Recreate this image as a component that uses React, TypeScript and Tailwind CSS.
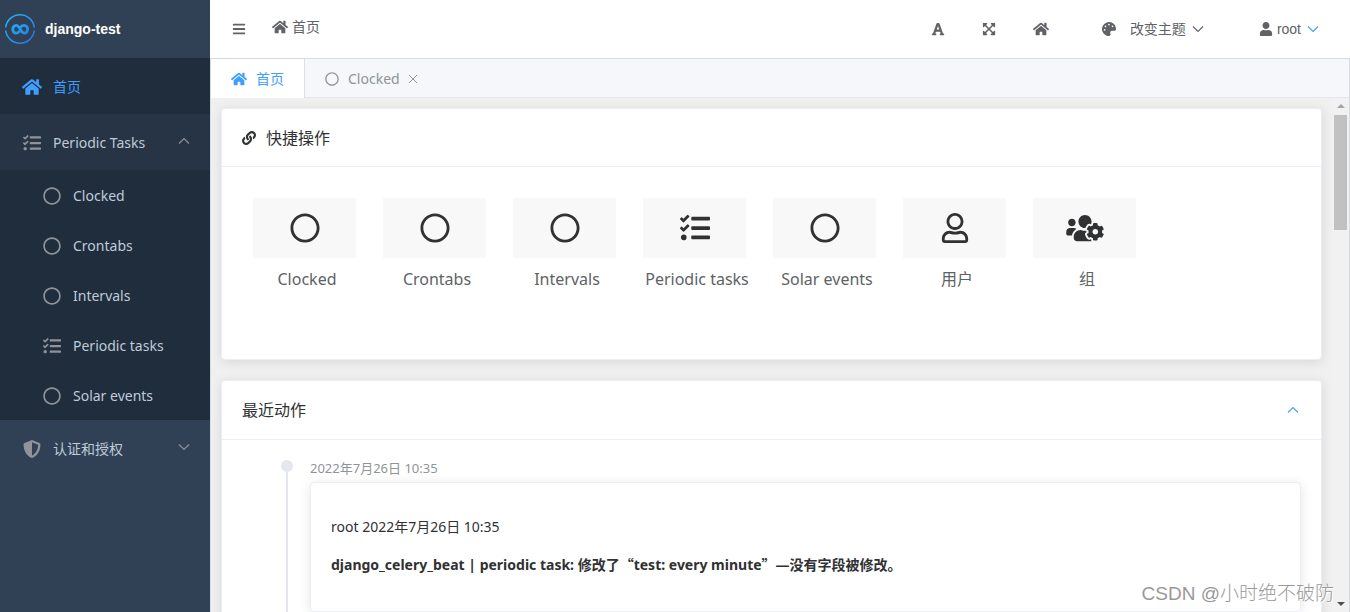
import type { ReactNode } from "react";
import type { IconType } from "react-icons";
import {
  FaBars,
  FaExpandArrowsAlt,
  FaFont,
  FaHome,
  FaLink,
  FaPalette,
  FaRegCircle,
  FaRegUser,
  FaShieldAlt,
  FaTasks,
  FaUser,
  FaUsersCog,
} from "react-icons/fa";

const subMenus: { name: string; icon: IconType }[] = [
  { name: "Clocked", icon: FaRegCircle },
  { name: "Crontabs", icon: FaRegCircle },
  { name: "Intervals", icon: FaRegCircle },
  { name: "Periodic tasks", icon: FaTasks },
  { name: "Solar events", icon: FaRegCircle },
];

const quickActions: { name: string; icon: IconType; iconClass: string }[] = [
  { name: "Clocked", icon: FaRegCircle, iconClass: "size-[30px]" },
  { name: "Crontabs", icon: FaRegCircle, iconClass: "size-[30px]" },
  { name: "Intervals", icon: FaRegCircle, iconClass: "size-[30px]" },
  { name: "Periodic tasks", icon: FaTasks, iconClass: "size-[30px]" },
  { name: "Solar events", icon: FaRegCircle, iconClass: "size-[30px]" },
  { name: "用户", icon: FaRegUser, iconClass: "size-[30px]" },
  { name: "组", icon: FaUsersCog, iconClass: "w-[38px] h-[30px]" },
];

export default function App() {
  return (
    <div className="relative flex h-screen overflow-hidden bg-white font-['Noto_Sans','Noto_Sans_CJK_SC',sans-serif] text-sm text-[#303133]">
      <Sidebar />
      <div className="flex min-w-0 flex-1 flex-col">
        <Header />
        <div className="flex min-h-0 flex-1 flex-col border border-b-0 border-[#d8dce5]">
          <Tabs />
          <div className="flex min-h-0 flex-1 bg-[#f0f0f0]">
            <main className="flex min-w-0 flex-1 flex-col gap-5 overflow-hidden p-2.5">
              <QuickActions />
              <RecentActions />
            </main>
            <ScrollBar />
          </div>
        </div>
      </div>
      <div className="pointer-events-none absolute right-4 bottom-1 font-['Liberation_Sans','Noto_Sans_CJK_SC',sans-serif] text-[19px] leading-7 font-light text-[#999] [text-shadow:1px_1px_0_#fff]">
        CSDN @小时绝不破防
      </div>
    </div>
  );
}

function Sidebar() {
  return (
    <aside className="flex w-[210px] shrink-0 flex-col bg-[#304156] text-[#bfcbd9]">
      <div className="flex h-[58px] items-center gap-[9px] pl-1">
        <Logo />
        <span className="font-['Liberation_Sans',sans-serif] font-bold text-white">
          django-test
        </span>
      </div>
      <nav>
        <a
          href="#home"
          className="flex h-14 items-center gap-[11px] bg-[#1f2d3d] pt-0.5 pl-[22px] text-[#409eff]"
        >
          <FaHome className="size-5" />
          首页
        </a>
        <button className="flex h-14 w-full items-center gap-3 bg-[#263445] pt-0.5 pr-5 pl-[23px]">
          <FaTasks className="size-[18px] text-[#909399]" />
          Periodic Tasks
          <Chevron up className="mb-1 ml-auto text-[#909399]" />
        </button>
        <ul className="bg-[#1f2d3d]">
          {subMenus.map(({ name, icon: Icon }) => (
            <li key={name}>
              <a
                href="#menu"
                className="flex h-[50px] items-center gap-3 pt-0.5 pl-[43px]"
              >
                <Icon className="size-[18px] text-[#909399]" />
                {name}
              </a>
            </li>
          ))}
        </ul>
        <button className="flex h-14 w-full items-center gap-3 pt-0.5 pr-5 pl-[23px]">
          <FaShieldAlt className="size-[18px] text-[#909399]" />
          认证和授权
          <Chevron className="mb-1 ml-auto text-[#909399]" />
        </button>
      </nav>
    </aside>
  );
}

function Header() {
  return (
    <header className="flex h-[58px] shrink-0 items-center pr-[31px] pl-[22px] text-[#606266]">
      <button aria-label="menu">
        <FaBars className="size-3.5" />
      </button>
      <a href="#home" className="mb-1 ml-[26px] flex items-center gap-1">
        <FaHome className="size-4" />
        首页
      </a>
      <div className="ml-auto flex items-center">
        <button aria-label="font size">
          <FaFont className="size-3.5" />
        </button>
        <button aria-label="fullscreen" className="ml-[37px]">
          <FaExpandArrowsAlt className="size-3.5" />
        </button>
        <a href="#home" aria-label="home" className="ml-[37px]">
          <FaHome className="size-4" />
        </a>
        <button className="ml-[53px] flex items-center">
          <FaPalette className="mr-3.5 size-3.5" />
          改变主题
          <Chevron className="ml-1.5" />
        </button>
        <button className="ml-[55px] flex items-center font-['Liberation_Sans',sans-serif]">
          <FaUser className="mr-1 size-3.5" />
          root
          <Chevron className="ml-1.5 text-[#409eff]" />
        </button>
      </div>
    </header>
  );
}

function Tabs() {
  return (
    <div className="flex h-[39px] shrink-0 bg-[#f5f7fa]">
      <a
        href="#home"
        className="flex w-[94px] items-center gap-[9px] border-r border-[#dcdfe6] bg-white pl-5 text-[#409eff]"
      >
        <FaHome className="size-4" />
        首页
      </a>
      <div className="flex flex-1 items-center border-b border-[#e4e7ed] pt-px pl-5 text-[#909399]">
        <a href="#clocked" className="flex items-center gap-[9px]">
          <FaRegCircle className="size-3.5" />
          Clocked
        </a>
        <button aria-label="close" className="ml-2">
          <svg
            viewBox="0 0 10 10"
            className="size-2.5"
            stroke="currentColor"
            fill="none"
          >
            <path d="M1 1L9 9M9 1L1 9" />
          </svg>
        </button>
      </div>
    </div>
  );
}

function Card({
  children,
  className = "",
}: {
  children: ReactNode;
  className?: string;
}) {
  return (
    <section
      className={`shrink-0 rounded border border-[#ebeef5] bg-white shadow-[0_2px_12px_0_rgba(0,0,0,0.1)] ${className}`}
    >
      {children}
    </section>
  );
}

function QuickActions() {
  return (
    <Card className="min-h-[252px]">
      <div className="flex h-[58px] items-center gap-2.5 border-b border-[#ebeef5] px-5 text-base">
        <FaLink className="size-3.5" />
        快捷操作
      </div>
      <div className="flex flex-wrap px-5 pt-[31px]">
        {quickActions.map(({ name, icon: Icon, iconClass }) => (
          <a
            key={name}
            href="#action"
            className="flex w-[130px] flex-col text-center text-base text-[#606266]"
          >
            <span className="mr-4 ml-[11px] flex h-[60px] items-center justify-center bg-[#f8f8f8] text-[#303133]">
              <Icon className={iconClass} />
            </span>
            <span className="mt-[9px] whitespace-nowrap">{name}</span>
          </a>
        ))}
      </div>
    </Card>
  );
}

function RecentActions() {
  return (
    <Card>
      <div className="flex h-[59px] items-center justify-between border-b border-[#ebeef5] px-5 text-base">
        最近动作
        <button aria-label="collapse" className="mr-0.5">
          <Chevron up className="text-[#409eff]" />
        </button>
      </div>
      <ol className="p-5 pl-[59px]">
        <li className="flex gap-[17px]">
          <div className="flex w-3 flex-col items-center">
            <span className="size-3 rounded-full bg-[#e4e7ed]" />
            <span className="w-0.5 flex-1 bg-[#e4e7ed]" />
          </div>
          <div className="min-w-0 flex-1 pb-5">
            <time className="block h-[22px] text-[13px] leading-4 text-[#909399]">
              2022年7月26日 10:35
            </time>
            <Card className="flex flex-col gap-[17px] px-5 pt-[34px] pb-9">
              <p>root 2022年7月26日 10:35</p>
              <p className="font-bold">
                django_celery_beat | periodic task: 修改了
                <Quote>“</Quote>test: every minute<Quote>”</Quote>
                —没有字段被修改。
              </p>
            </Card>
          </div>
        </li>
      </ol>
    </Card>
  );
}

// full-width quotation marks
function Quote({ children }: { children: ReactNode }) {
  return (
    <span className="font-['Noto_Sans_CJK_SC',sans-serif]">{children}</span>
  );
}

function ScrollBar() {
  return (
    <div className="flex w-[17px] shrink-0 flex-col items-center bg-[#f1f1f1] py-1.5">
      <svg viewBox="0 0 8 4" className="h-1 w-2 text-[#a3a3a3]">
        <path d="M4 0L8 4H0Z" fill="currentColor" />
      </svg>
      <span className="mt-[7px] h-[115px] w-[13px] bg-[#c1c1c1]" />
      <svg viewBox="0 0 8 4" className="mt-auto h-1 w-2 text-[#505050]">
        <path d="M0 0H8L4 4Z" fill="currentColor" />
      </svg>
    </div>
  );
}

function Chevron({ up, className = "" }: { up?: boolean; className?: string }) {
  return (
    <svg
      viewBox="0 0 12 12"
      className={`size-3 shrink-0 ${className}`}
      stroke="currentColor"
      strokeWidth="1.1"
      fill="none"
    >
      <path d={up ? "M1 8.5L6 3.5L11 8.5" : "M1 3.5L6 8.5L11 3.5"} />
    </svg>
  );
}

function Logo() {
  return (
    <svg viewBox="0 0 32 32" className="size-8" fill="none">
      <defs>
        <linearGradient
          id="logo"
          x1="0"
          y1="0"
          x2="32"
          y2="32"
          gradientUnits="userSpaceOnUse"
        >
          <stop stopColor="#1fc0f5" />
          <stop offset="1" stopColor="#2a6fe0" />
        </linearGradient>
      </defs>
      <g stroke="url(#logo)">
        <path
          d="M1.7 14.5A14.4 14.4 0 0 1 30.3 14.5M30.3 17.5A14.4 14.4 0 0 1 1.7 17.5"
          strokeWidth="1.5"
        />
        <path
          d="M16.6 14.2C17.6 13 18.8 12.3 20.2 12.3C22.2 12.3 23.6 14 23.6 16.2C23.6 18.4 22.2 20.1 20.2 20.1C16.4 20.1 16 12.3 12.2 12.3C10.2 12.3 8.8 14 8.8 16.2C8.8 18.4 10.2 20.1 12.2 20.1C13.6 20.1 14.8 19.4 15.8 18.2"
          strokeWidth="2.8"
          strokeLinecap="round"
        />
      </g>
    </svg>
  );
}
